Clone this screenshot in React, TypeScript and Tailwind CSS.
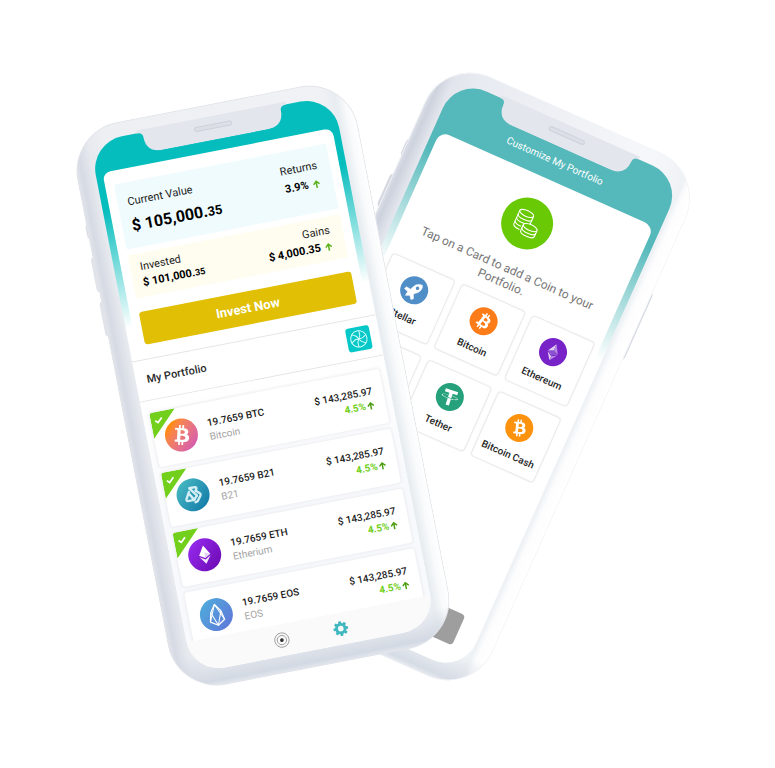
import type { ReactNode } from "react";

const BITCOIN =
  "M23.189 14.02c.314-2.096-1.283-3.223-3.465-3.975l.708-2.84-1.728-.43-.69 2.765c-.454-.114-.92-.22-1.385-.326l.695-2.783L15.596 6l-.708 2.839c-.376-.086-.746-.17-1.104-.26l.002-.009-2.384-.595-.46 1.846s1.283.294 1.256.312c.7.175.826.638.805 1.006l-.806 3.235c.048.012.11.03.18.057l-.183-.045-1.13 4.532c-.086.212-.303.531-.793.41.018.025-1.256-.313-1.256-.313l-.858 1.978 2.25.561c.418.105.828.215 1.231.318l-.715 2.872 1.727.43.708-2.84c.472.127.93.245 1.378.357l-.706 2.828 1.728.43.715-2.866c2.948.558 5.164.333 6.097-2.333.752-2.146-.037-3.385-1.588-4.192 1.13-.26 1.98-1.003 2.207-2.538zm-3.95 5.538c-.533 2.147-4.148.986-5.32.695l.95-3.805c1.172.293 4.929.872 4.37 3.11zm.535-5.569c-.487 1.953-3.495.96-4.47.717l.86-3.45c.975.243 4.118.696 3.61 2.733z";

const TETHER =
  "M17.922 17.383v-.002c-.11.008-.677.042-1.942.042-1.01 0-1.721-.03-1.971-.042v.003c-3.888-.171-6.79-.848-6.79-1.658 0-.809 2.902-1.486 6.79-1.66v2.644c.254.018.982.061 1.988.061 1.207 0 1.812-.05 1.925-.06v-2.643c3.88.173 6.775.85 6.775 1.658 0 .81-2.895 1.485-6.775 1.657m0-3.59v-2.366h5.414V7.819H8.595v3.608h5.414v2.365c-4.4.202-7.709 1.074-7.709 2.118 0 1.044 3.309 1.915 7.709 2.118v7.582h3.913v-7.584c4.393-.202 7.694-1.073 7.694-2.116 0-1.043-3.301-1.914-7.694-2.117";

function BitcoinGlyph({ className = "" }: { className?: string }) {
  return (
    <svg viewBox="0 0 32 32" className={`size-full ${className}`} aria-hidden="true">
      <path d={BITCOIN} fill="#fff" />
    </svg>
  );
}

function TetherGlyph() {
  return (
    <svg viewBox="0 0 32 32" className="size-full -rotate-6" aria-hidden="true">
      <path d={TETHER} fill="#fff" />
    </svg>
  );
}

function EtherGlyph() {
  return (
    <svg viewBox="0 0 32 32" className="size-full" aria-hidden="true">
      <path d="M16 7l-5.500 9 5.500 3.200 5.500-3.200z" fill="#fff" />
      <path d="M10.500 17.400l5.500 3.300 5.500-3.300L16 25z" fill="#fff" fillOpacity=".9" />
      <path d="M16 13.600v5.600l5.500-3.200z" fill="#b98be8" fillOpacity=".4" />
    </svg>
  );
}

function EtherOutlineGlyph() {
  return (
    <svg viewBox="0 0 32 32" className="size-full" aria-hidden="true">
      <path d="M16 6l-6 10.200L16 19.800z" fill="#e2cff5" />
      <path d="M16 6l6 10.200L16 19.800z" fill="#b48be0" />
      <path d="M16 13.500l-6 2.700L16 19.800l6-3.600z" fill="#8a4fd0" />
      <path d="M10 17.600L16 26v-4.800z" fill="#e2cff5" />
      <path d="M22 17.600L16 26v-4.800z" fill="#b48be0" />
    </svg>
  );
}

function B21Glyph() {
  return (
    <svg viewBox="0 0 32 32" className="size-full" fill="none" stroke="#d5eef3" strokeWidth="2.300" strokeLinejoin="round" strokeLinecap="round" aria-hidden="true">
      <path d="M12.500 12.500L9 18.800q-.8 1.900 1 2.200h6.200l-3.700-6.500" />
      <path d="M13.500 9h5.500q1.800.1 1.300 1.600l-1 1.900M13.500 9l6 8.200" />
      <path d="M19.300 12.500l3.400 3.300q1 1 .2 2.200l-3.600 4.800-2.300.6M19.500 17.500L16 21" />
    </svg>
  );
}

function EosGlyph() {
  return (
    <svg viewBox="0 0 32 32" className="size-full" fill="none" stroke="#fff" strokeWidth="1.200" strokeLinejoin="round" aria-hidden="true">
      <path d="M16 6l-5 7.200L9 22l7 4.500 7-4.500-2-8.800z" />
      <path d="M11 13.200L16 26.500l5-13.300M9 22l7-16M23 22L16 6" strokeWidth="1" />
    </svg>
  );
}

function RocketGlyph() {
  return (
    <svg viewBox="0 0 32 32" className="size-full" aria-hidden="true">
      <g transform="rotate(-54 16 16)">
        <path
          d="M27 16c-2.200-4-6.600-5.200-11.500-3.700l-2.500.4-2.600-4.700-2.900.8 1.400 4.700L4.500 16l4.400 2.500-1.400 4.700 2.900.8 2.600-4.700 2.500.4C20.400 21.200 24.800 20 27 16z"
          fill="#fff"
          stroke="#fff"
          strokeWidth=".6"
          strokeLinejoin="round"
        />
        <circle cx="20.500" cy="16" r="2" fill="#4f8ec6" />
      </g>
    </svg>
  );
}

function ShutterGlyph() {
  return (
    <svg viewBox="0 0 24 24" className="size-6" fill="none" stroke="#d9fbfb" strokeWidth="1" aria-hidden="true">
      <circle cx="12" cy="12" r="8.200" />
      {[10, 70, 130, 190, 250, 310].map((angle) => (
        <path key={angle} d="M12 12L13 8.500L12 3.800" transform={`rotate(${angle} 12 12)`} />
      ))}
    </svg>
  );
}

function CoinsGlyph() {
  return (
    <svg viewBox="0 0 52 52" className="size-full" fill="none" stroke="#fff" strokeWidth="1.100" aria-hidden="true">
      <ellipse cx="21.500" cy="17" rx="7.500" ry="3" />
      <path d="M14 17v14.500c0 1.700 3.400 3 7.500 3M29 17v9" />
      <path d="M14 20.700c0 1.700 3.400 3 7.500 3s7.500-1.300 7.500-3M14 24.300c0 1.700 3.400 3 7.500 3s7.500-1.300 7.500-3M14 28c0 1.700 3.400 3 7.500 3" />
      <ellipse cx="30.500" cy="28.500" rx="7.500" ry="3" fill="#69c904" />
      <path d="M23 28.500v6.500c0 1.700 3.400 3 7.500 3s7.500-1.300 7.500-3v-6.500" />
      <path d="M23 31.700c0 1.700 3.400 3 7.500 3s7.500-1.300 7.500-3" />
    </svg>
  );
}

function GearGlyph() {
  return (
    <svg viewBox="0 0 24 24" className="size-4" aria-hidden="true">
      <g fill="#41b8bf">
        <circle cx="12" cy="12" r="8.500" />
        {[0, 45, 90, 135].map((angle) => (
          <rect key={angle} x="9.800" y="1" width="4.400" height="22" rx="1" transform={`rotate(${angle} 12 12)`} />
        ))}
      </g>
      <circle cx="12" cy="12" r="4.200" fill="#fafafa" />
    </svg>
  );
}

function TargetGlyph() {
  return (
    <svg viewBox="0 0 24 24" className="size-4" fill="none" stroke="#8f8f8f" strokeWidth="1.200" aria-hidden="true">
      <circle cx="12" cy="12" r="10.800" />
      <circle cx="12" cy="12" r="7" />
      <circle cx="12" cy="12" r="2.800" fill="#333" stroke="none" />
    </svg>
  );
}

function ArrowUp({ color }: { color: string }) {
  return (
    <svg viewBox="0 0 8 8" className="size-2" fill="none" stroke={color} strokeWidth="1.500" aria-hidden="true">
      <path d="M4 8V1.200M1 4.200L4 1.200l3 3" />
    </svg>
  );
}

function Phone({
  className,
  shell,
  screen,
  buttons,
  children,
}: {
  className: string;
  shell: string;
  screen: string;
  buttons: ReactNode;
  children: ReactNode;
}) {
  return (
    <section className={`relative h-[573px] w-[286px] shrink-0 ${className}`}>
      {buttons}
      <div className={`relative h-full rounded-[50px] px-[19px] pt-[15px] pb-[17px] ${shell}`}>
        <div className={`flex h-full flex-col overflow-hidden rounded-[33px] ${screen}`}>{children}</div>
        <svg viewBox="0 0 160 24" className="absolute top-3 left-[63px] h-6 w-40" aria-hidden="true">
          <path d="M4 0V3Q10 3 10 8Q10 24 27 24H133Q150 24 150 8Q150 3 156 3V0Z" fill="#e3e6ec" />
          <rect x="61.500" y="8.500" width="38" height="4" rx="2" fill="#dcdfe6" stroke="#cdd1d9" strokeWidth="1" />
        </svg>
      </div>
    </section>
  );
}

function Money({ whole, cents, wholeClass, centsClass }: { whole: string; cents: string; wholeClass: string; centsClass: string }) {
  return (
    <p className={`font-bold text-black ${wholeClass}`}>
      {whole}
      <span className={centsClass}>{cents}</span>
    </p>
  );
}

const holdings = [
  { symbol: "BTC", name: "Bitcoin", owned: true, disc: "bg-linear-to-br from-[#ff8a10] from-20% to-[#d04cc0]", glyph: <BitcoinGlyph /> },
  { symbol: "B21", name: "B21", owned: true, disc: "bg-linear-to-br from-[#4cc0c4] to-[#0b74a6]", glyph: <B21Glyph /> },
  { symbol: "ETH", name: "Etherium", owned: true, disc: "bg-linear-to-br from-[#9a2cf5] to-[#6a05ae]", glyph: <EtherGlyph /> },
  { symbol: "EOS", name: "EOS", owned: false, disc: "bg-linear-to-br from-[#4ab0dc] to-[#5f72d8]", glyph: <EosGlyph /> },
];

function HoldingRow({ symbol, name, owned, disc, glyph }: (typeof holdings)[number]) {
  return (
    <li className="relative flex h-[55px] shrink-0 items-center rounded-[3px] bg-white pr-[11px] pl-[11px] shadow-[0_0_3px_1px_#ecedf0]">
      {owned && (
        <svg viewBox="0 0 26 26" className="absolute top-0 left-0 size-[26px]" aria-hidden="true">
          <path d="M3 0H26L0 26V3Q0 0 3 0Z" fill="#72d01c" />
          <path d="M4.500 8.500l2.400 2.400L11.500 6.500" fill="none" stroke="#fff" strokeWidth="1.700" />
        </svg>
      )}
      <span className={`relative size-[33px] rounded-full ${disc}`}>{glyph}</span>
      <div className="ml-[11px] flex-1">
        <p className="text-[10px] leading-[15px] font-medium text-[#1c1c1c]">19.7659 {symbol}</p>
        <p className="text-[10px] leading-[14px] text-[#a3a3a3]">{name}</p>
      </div>
      <div className="text-right">
        <p className="text-[10px] leading-[15px] font-medium text-[#1c1c1c]">$ 143,285.97</p>
        <p className="flex items-center justify-end gap-px text-[10px] leading-[14px] font-bold text-[#72d01c]">
          4.5%
          <ArrowUp color="#4f9f14" />
        </p>
      </div>
    </li>
  );
}

function WalletPhone() {
  return (
    <Phone
      className="z-10 mt-[9px] -rotate-11"
      shell="bg-[linear-gradient(to_bottom,transparent_94%,#d3d9e3_99%,#e4e8ef_100%),linear-gradient(to_right,#e2e5eb_0%,#d6dae3_2%,#e6e9ee_6%,#edeff3_12%,#f1f2f6_88%,#e8edf1_94%,#f8fafb_97%,#ffffff_100%)] shadow-[inset_0_0_0_1px_#e2e4e9]"
      screen="bg-[linear-gradient(to_bottom,#06bdbd_0px,#06bdbd_70px,#ffffff_190px)]"
      buttons={
        <>
          <span className="absolute top-[94px] -left-px h-4 w-2 rounded-sm bg-[#dadde5]" />
          <span className="absolute top-[128px] -left-0.5 h-9 w-2 rounded-sm bg-[#e0e3e9]" />
          <span className="absolute top-[173px] -left-0.5 h-9 w-2 rounded-sm bg-[#e0e3e9]" />
        </>
      }
    >
      <div className="mx-[7px] mt-8 rounded-t-lg bg-white px-[9px] py-[14px]">
        <div className="flex h-[66px] items-start justify-between rounded-xs bg-[#effbfd] pr-[13px] pl-[10px]">
          <div className="pt-3">
            <p className="text-[11px] leading-4 text-[#1c1c1c]">Current Value</p>
            <Money whole="$ 105,000." cents="35" wholeClass="text-[16px] leading-8" centsClass="text-[13px]" />
          </div>
          <div className="pt-3 text-right">
            <p className="text-[11px] leading-4 text-[#1c1c1c]">Returns</p>
            <p className="flex items-center justify-end gap-1 text-[11px] leading-5 font-bold text-black">
              3.9%
              <ArrowUp color="#5bb31c" />
            </p>
          </div>
        </div>
        <div className="mt-1.5 flex h-11 items-center justify-between rounded-xs bg-[#fffcf0] pr-[13px] pl-[10px]">
          <div>
            <p className="text-[11px] leading-4 text-[#1c1c1c]">Invested</p>
            <Money whole="$ 101,000." cents="35" wholeClass="text-[11px] leading-4" centsClass="text-[9px]" />
          </div>
          <div className="text-right">
            <p className="text-[11px] leading-4 text-[#1c1c1c]">Gains</p>
            <p className="flex items-center justify-end gap-1 text-[11px] leading-4 font-bold text-black">
              $ 4,000.35
              <ArrowUp color="#5bb31c" />
            </p>
          </div>
        </div>
        <button type="button" className="mt-[14px] block h-[33px] w-full rounded-[3px] bg-[#e0bf04] text-[13px] font-bold text-white">
          Invest Now
        </button>
      </div>
      <div className="flex h-[42px] shrink-0 items-center justify-between border-y border-[#e6e6e9] bg-white pr-[9px] pl-[11px]">
        <h2 className="text-[11px] font-medium text-[#2a2a2a]">My Portfolio</h2>
        <button type="button" aria-label="Allocation" className="size-6 rounded-[3px] bg-[#06c8c8]">
          <ShutterGlyph />
        </button>
      </div>
      <ul className="flex min-h-0 flex-1 flex-col gap-1.5 overflow-hidden bg-linear-to-b from-white to-[#f8f9fc] to-50% px-[7px] pt-3">
        {holdings.map((h) => (
          <HoldingRow key={h.symbol} {...h} />
        ))}
      </ul>
      <nav className="flex h-8 shrink-0 items-center justify-center gap-11 bg-[#fafafa]">
        <button type="button" aria-label="Home">
          <TargetGlyph />
        </button>
        <button type="button" aria-label="Settings">
          <GearGlyph />
        </button>
      </nav>
    </Phone>
  );
}

const coins = [
  { name: "Stellar", disc: "bg-[#4f8ec6]", glyph: <RocketGlyph /> },
  { name: "Bitcoin", disc: "bg-[#fb7c18]", glyph: <BitcoinGlyph /> },
  { name: "Ethereum", disc: "bg-[#7723c8]", glyph: <EtherOutlineGlyph /> },
  { name: "", disc: "", glyph: null },
  { name: "Tether", disc: "bg-[#26a17b]", glyph: <TetherGlyph /> },
  { name: "Bitcoin Cash", disc: "bg-[#fd920e]", glyph: <BitcoinGlyph className="-rotate-[32deg]" /> },
];

function CustomizePhone() {
  return (
    <Phone
      className="-ml-[90px] rotate-24"
      shell="bg-[linear-gradient(to_bottom,transparent_94%,#d6dce5_99%,#e9ecf2_100%),linear-gradient(to_right,#dde0e8_0%,#cdd2dd_2%,#e2e5ec_6%,#e8ebf1_15%,#f6f7fa_80%,#eff2f5_94%,#fdfdfe_96%,#ffffff_100%)] shadow-[inset_0_0_0_1px_#f3f4f7]"
      screen="bg-[linear-gradient(to_bottom,#55b9bb_0px,#55b9bb_75px,#ffffff_200px)]"
      buttons={
        <>
          <span className="absolute top-[89px] -left-px h-5 w-2 rounded-sm bg-[#d5d8e1]" />
          <span className="absolute top-[128px] -left-0.5 h-9 w-2 rounded-sm bg-[#d5d8e1]" />
          <span className="absolute top-[131px] -right-px h-[74px] w-2 rounded-sm bg-[#d5d8e1]" />
        </>
      }
    >
      <h1 className="pt-7 text-center text-[10px] leading-4 text-white">Customize My Portfolio</h1>
      <div className="mx-[7px] mt-[11px] flex flex-1 flex-col rounded-t-[10px] bg-white px-1.5 pt-[23px]">
        <div className="mx-auto size-[52px] shrink-0 rounded-full bg-[#69c904]">
          <CoinsGlyph />
        </div>
        <p className="mx-auto mt-4 w-[206px] text-center text-[12px] leading-[15px] text-[#757575]">
          Tap on a Card to add a Coin to your Portfolio.
        </p>
        <div className="mt-[9px] grid grid-cols-3 gap-x-[7px] gap-y-3">
          {coins.map((coin, i) => (
            <button
              key={i}
              type="button"
              aria-label={coin.name || "Coin"}
              className="flex h-[71px] flex-col items-center rounded-sm border border-[#eaeaea] bg-white pt-[11px] shadow-[0_0_2px_#eeeeee]"
            >
              {coin.name && (
                <>
                  <span className={`size-7 shrink-0 rounded-full ${coin.disc}`}>{coin.glyph}</span>
                  <span className="mt-[7px] text-[10px] leading-4 font-medium whitespace-nowrap text-[#1f1f1f]">{coin.name}</span>
                </>
              )}
            </button>
          ))}
        </div>
        <button type="button" aria-label="Continue" className="mx-2 mt-auto mb-[21px] h-[33px] rounded-sm bg-[#9e9e9e]" />
      </div>
    </Phone>
  );
}

export default function App() {
  return (
    <main className="flex min-h-screen items-start justify-center overflow-hidden bg-white pt-[90px] pr-[53px] font-[Roboto,sans-serif]">
      <WalletPhone />
      <CustomizePhone />
    </main>
  );
}
